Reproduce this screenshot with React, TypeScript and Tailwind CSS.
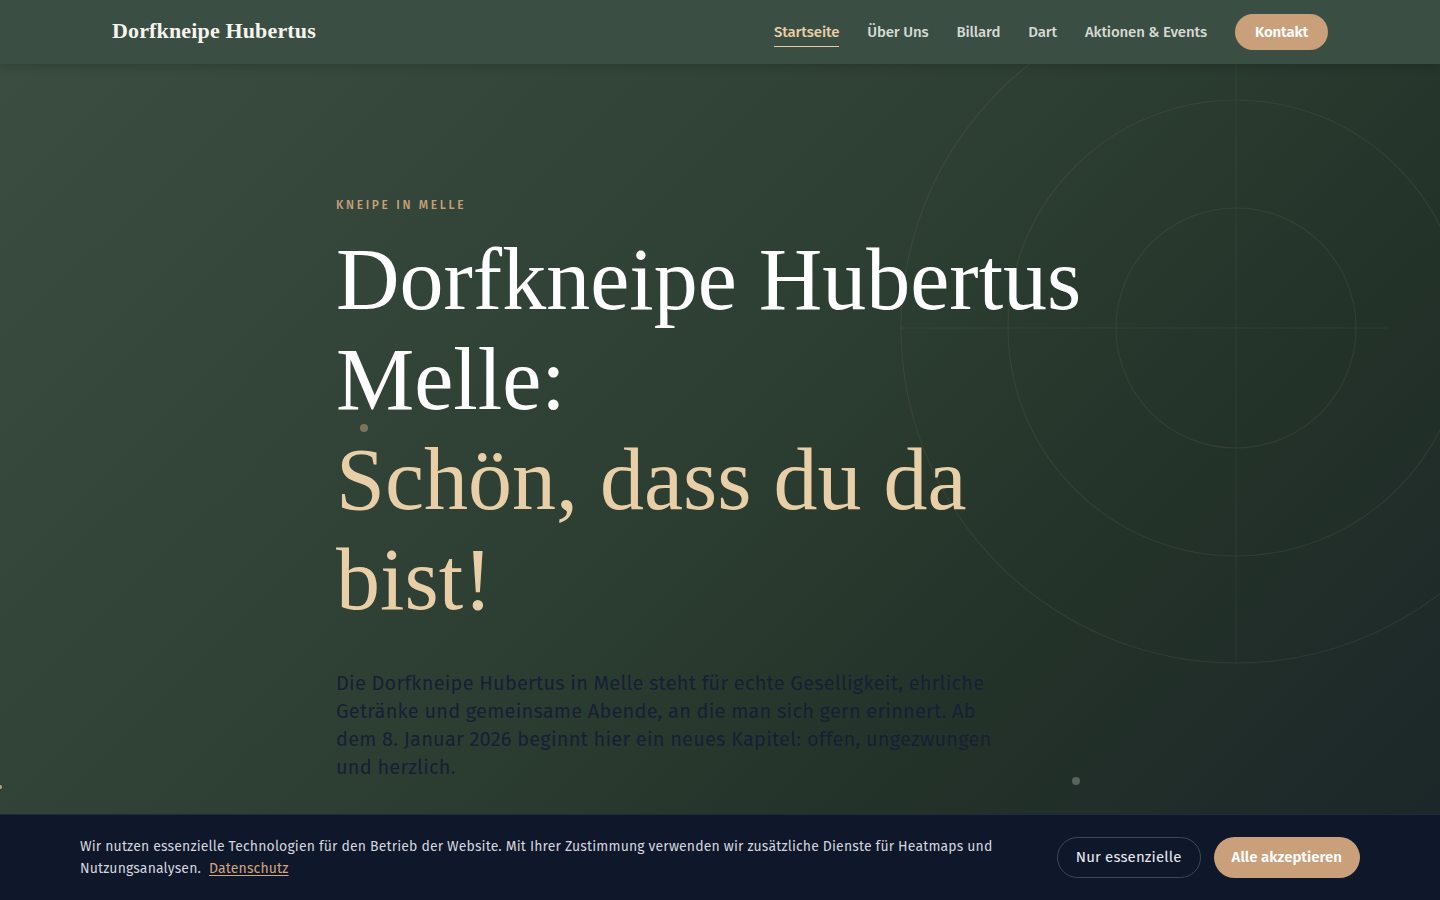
import React from "react";

const serif = "font-['Liberation_Serif','Times_New_Roman',serif]";
const sans = "font-['Fira_Sans',Roboto,'Liberation_Sans',sans-serif]";

const navItems = ["Startseite", "Über Uns", "Billard", "Dart", "Aktionen & Events"];

function Header() {
  return (
    <header className="relative z-20 h-16 bg-[#3a4e43] shadow-[0_2px_10px_rgba(0,0,0,0.18)]">
      <div className="mx-auto flex h-full max-w-7xl items-center justify-between px-8">
        <a className={`${serif} -mt-1 text-[22px] font-bold tracking-[0.15px] text-[#f7f4ee]`}>
          Dorfkneipe Hubertus
        </a>
        <nav className={`${sans} flex items-center gap-7 text-[15px] font-medium tracking-[-0.15px]`}>
          {navItems.map((item, i) => (
            <a
              key={item}
              className={
                i === 0
                  ? "border-b border-[#e6cba0] pb-[3px] pt-1 text-[#e8cfa6]"
                  : "pt-1 pb-1 text-[#d5dad3]"
              }
            >
              {item}
            </a>
          ))}
          <a className="flex h-9 items-center rounded-full bg-[#c9a07a] px-5 font-semibold text-white">
            Kontakt
          </a>
        </nav>
      </div>
    </header>
  );
}

// target-like rings behind the hero text
function Rings() {
  return (
    <svg
      className="pointer-events-none absolute left-[900px] top-[-8px]"
      width="672"
      height="672"
      viewBox="0 0 672 672"
      fill="none"
    >
      <g stroke="#c9a07a" strokeOpacity="0.1" strokeWidth="1.2">
        <circle cx="336" cy="336" r="335" />
        <circle cx="336" cy="336" r="228" />
        <circle cx="336" cy="336" r="120" />
      </g>
      <g stroke="#8fa894" strokeOpacity="0.1" strokeWidth="1">
        <line x1="336" y1="0" x2="336" y2="672" />
        <line x1="0" y1="336" x2="488" y2="336" />
      </g>
    </svg>
  );
}

function CookieBar() {
  return (
    <div className="fixed inset-x-0 bottom-0 z-30 border-t border-[#1f2a3a] bg-[#0f172b]">
      <div className={`${sans} flex h-[85px] items-center justify-between px-20`}>
        <p className="max-w-[930px] text-[14px] leading-[22px] tracking-[0.15px] text-[#d3d6dc]">
          Wir nutzen essenzielle Technologien für den Betrieb der Website. Mit Ihrer Zustimmung
          verwenden wir zusätzliche Dienste für Heatmaps und Nutzungsanalysen.
          <a className="ml-2 inline-block leading-[20px] text-[#d2a57c] underline underline-offset-2">
            Datenschutz
          </a>
        </p>
        <div className="-mt-px flex items-center gap-[13px]">
          <button className="h-[41px] rounded-full border border-[#3f4856] px-[18px] text-[15px] tracking-[0.15px] text-[#e8eaee]">
            Nur essenzielle
          </button>
          <button className="h-[41px] rounded-full bg-[#c9a07a] px-[18px] text-[15px] font-semibold text-white">
            Alle akzeptieren
          </button>
        </div>
      </div>
    </div>
  );
}

export default function App() {
  return (
    <div className="relative h-[900px] w-full overflow-hidden bg-[linear-gradient(135deg,#3b4e41_0%,#2e4034_45%,#243329_70%,#1b2529_100%)]">
      <Header />
      <Rings />

      {/* floating dots */}
      <span className="absolute left-[360px] top-[424px] h-2 w-2 rounded-full bg-[#8c8262]/80" />
      <span className="absolute left-[1072px] top-[777px] h-2 w-2 rounded-full bg-[#66706b]/80" />
      <span className="absolute left-[-2px] top-[785px] h-1 w-1 rounded-full bg-[#c9a07a]" />

      <main className="relative z-10 mx-auto max-w-3xl pt-[133px]">
        <p className={`${sans} mb-[17px] text-[12px] font-medium leading-4 tracking-[0.22em] text-[#c69f78]`}>
          KNEIPE IN MELLE
        </p>
        <h1 className={`${serif} text-[88px] font-normal leading-[100px] text-white`}>
          Dorfkneipe Hubertus Melle:
          <span className="block text-[#e8cfa8]">Schön, dass du da bist!</span>
        </h1>
        <p className={`${sans} mt-[39px] max-w-2xl text-[20px] leading-7 tracking-[0.2px] text-[#171f35]`}>
          Die Dorfkneipe Hubertus in Melle steht für echte Geselligkeit, ehrliche Getränke und
          gemeinsame Abende, an die man sich gern erinnert. Ab dem 8. Januar 2026 beginnt hier ein
          neues Kapitel: offen, ungezwungen und herzlich.
        </p>
      </main>

      <CookieBar />
    </div>
  );
}
